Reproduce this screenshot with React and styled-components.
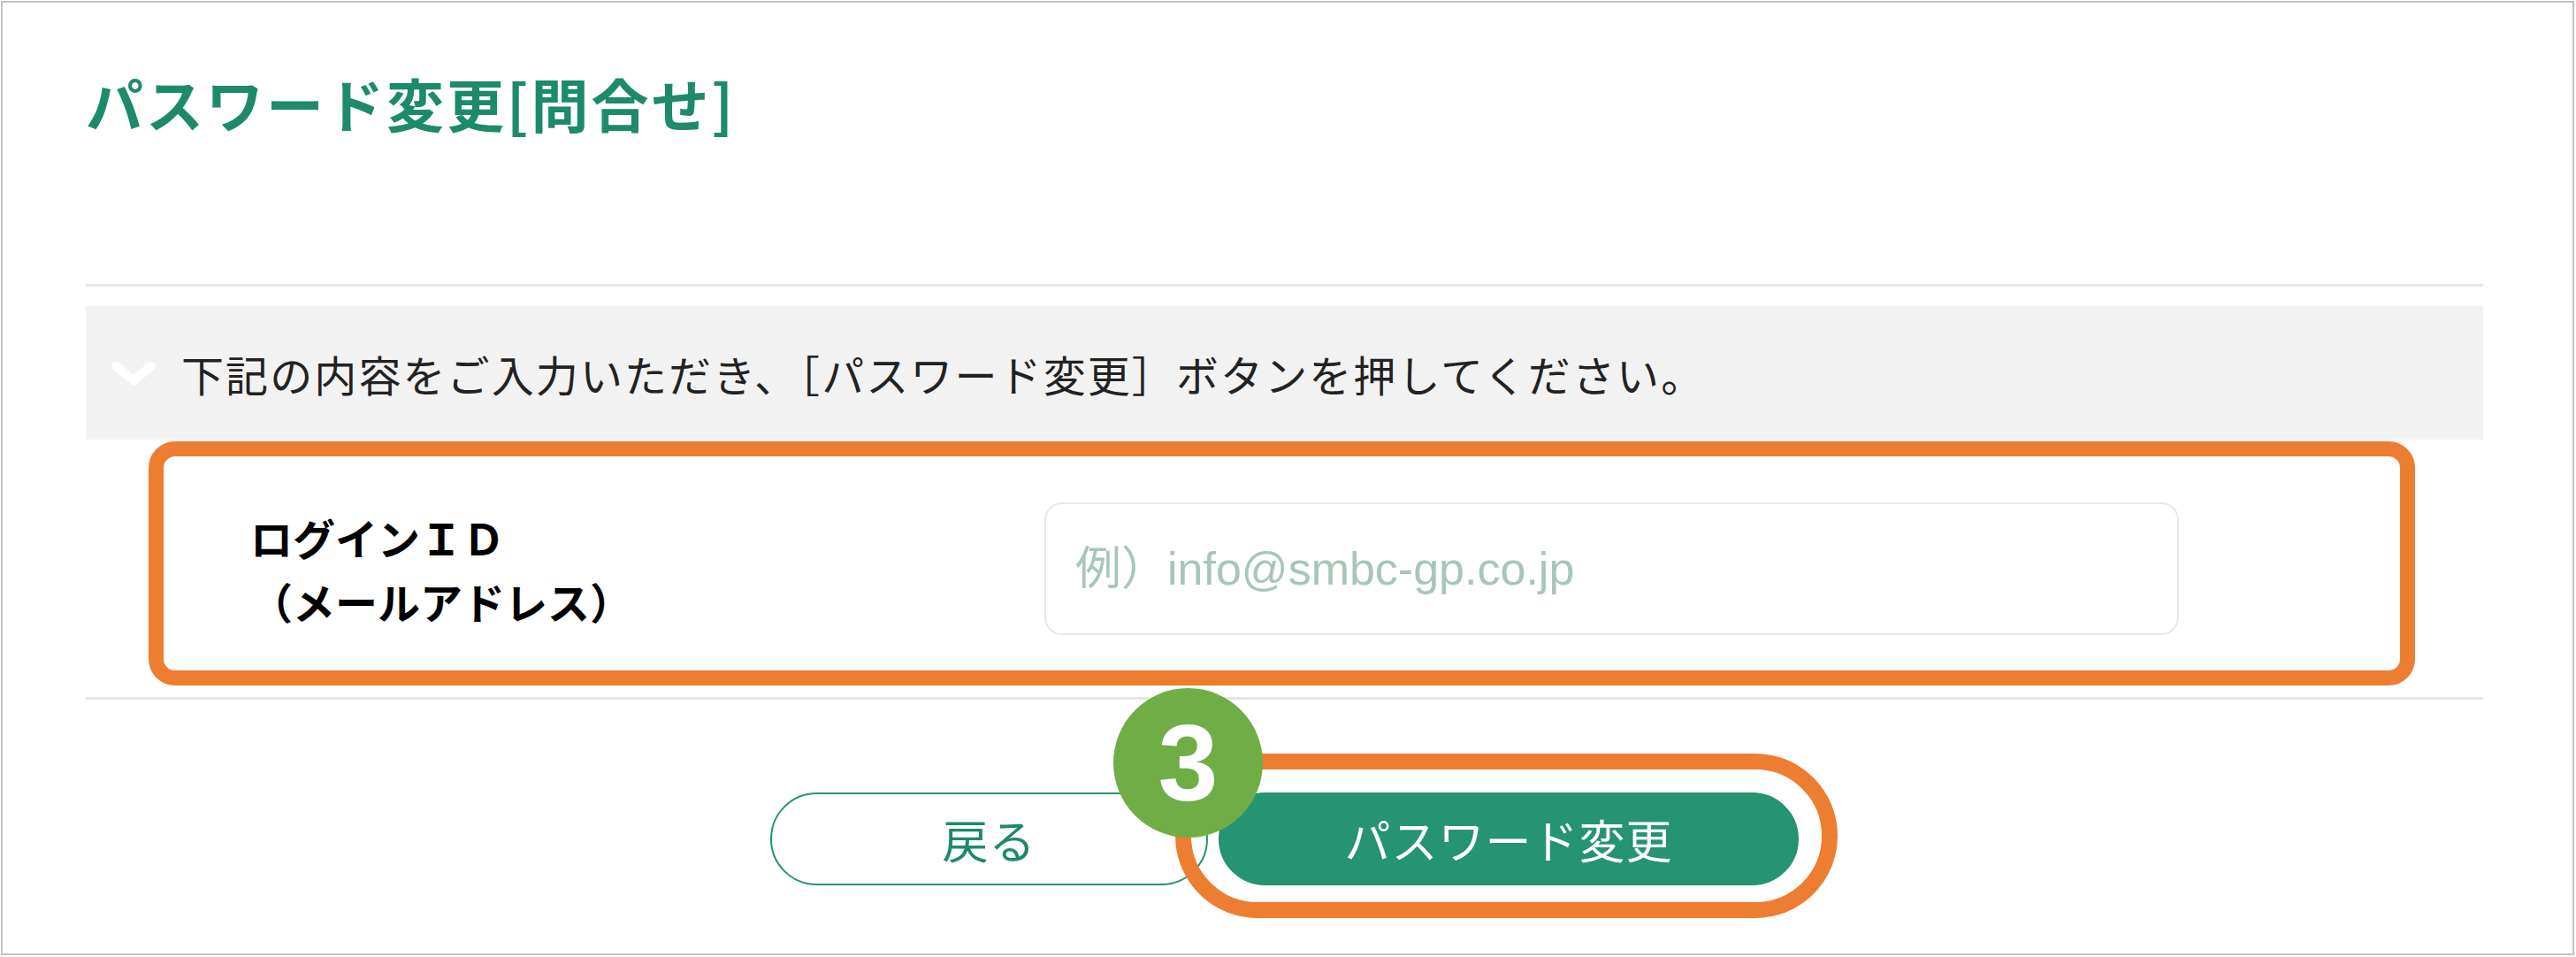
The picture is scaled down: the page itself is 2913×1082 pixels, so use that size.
import React from 'react';
import styled, { createGlobalStyle } from 'styled-components';

const JP = `"Noto Sans CJK JP", "Noto Sans", sans-serif`;

const GlobalStyle = createGlobalStyle`
  html, body {
    margin: 0;
    padding: 0;
    background: #fff;
  }
  body {
    font-family: ${JP};
  }
`;

const Frame = styled.div`
  box-sizing: border-box;
  width: 2910px;
  height: 1079px;
  margin: 1px 0 0 1px;
  border: 2px solid #c3c3c3;
  padding: 0 101px 0 94px;
  display: flex;
  flex-direction: column;
`;

const Header = styled.div`
  height: 318px;
  box-sizing: border-box;
  padding-top: 81px;
`;

const Title = styled.h1`
  margin: 0;
  font-family: ${JP};
  font-size: 65px;
  line-height: 1;
  font-weight: 700;
  letter-spacing: 3px;
  color: #1d8a6b;
`;

const Divider = styled.hr`
  margin: 0;
  border: none;
  height: 3px;
  background: #e5e5e5;
  flex-shrink: 0;
`;

const Notice = styled.div`
  margin-top: 22px;
  height: 151px;
  background: #f2f2f2;
  display: flex;
  align-items: center;
  padding-left: 28px;
  gap: 28px;
`;

const NoticeText = styled.p`
  margin: 0;
  font-size: 48px;
  letter-spacing: 2.1px;
  color: #222;
  line-height: 1;
`;

const FormRow = styled.div`
  position: relative;
  height: 291px;
  display: flex;
  align-items: center;
`;

const Label = styled.label`
  box-sizing: border-box;
  width: 1084px;
  padding-left: 186px;
  font-size: 48px;
  font-weight: 700;
  line-height: 72px;
  color: #000;
`;

const TextInput = styled.input`
  box-sizing: border-box;
  width: 1283px;
  height: 150px;
  border: 2px solid #e3e8f1;
  border-radius: 20px;
  padding: 0 0 0 33px;
  font-family: "Liberation Sans", ${JP};
  font-size: 52px;
  background: #fff;
  outline: none;

  &::placeholder {
    color: #a8c6b8;
  }
`;

const Highlight = styled.div`
  position: absolute;
  pointer-events: none;
  border: ${p => p.thick}px solid #ed7d31;
  border-radius: ${p => p.radius}px;
  top: ${p => p.top}px;
  left: ${p => p.left}px;
  right: ${p => p.right}px;
  bottom: ${p => p.bottom}px;
  z-index: 2;
`;

const Actions = styled.div`
  padding-top: 105px;
  display: flex;
  justify-content: center;
  gap: 12px;
`;

const Button = styled.button`
  box-sizing: border-box;
  height: 105px;
  width: ${p => p.width}px;
  border-radius: 53px;
  font-family: ${JP};
  font-size: 52px;
  letter-spacing: 1px;
  line-height: 1;
  cursor: pointer;
  border: 2px solid #279272;
  background: ${p => (p.primary ? '#269373' : '#fff')};
  color: ${p => (p.primary ? '#fff' : '#1d8a6b')};
`;

const PrimaryWrap = styled.div`
  position: relative;
`;

const StepBadge = styled.div`
  position: absolute;
  z-index: 3;
  left: -119px;
  top: -118px;
  width: 169px;
  height: 169px;
  border-radius: 50%;
  background: #70ad47;
  color: #fff;
  display: flex;
  align-items: center;
  justify-content: center;
  font-family: "Liberation Sans", sans-serif;
  font-weight: 700;
  font-size: 122px;
  line-height: 1;
`;

function Chevron() {
  return (
    <svg width="52" height="28" viewBox="0 0 52 28">
      <polyline
        points="6,6 26,22 46,6"
        fill="none"
        stroke="#fff"
        strokeWidth="10"
        strokeLinecap="round"
        strokeLinejoin="round"
      />
    </svg>
  );
}

export default function App() {
  return (
    <>
      <GlobalStyle />
      <Frame>
        <Header>
          <Title>パスワード変更[問合せ]</Title>
        </Header>
        <Divider />
        <Notice>
          <Chevron />
          <NoticeText>下記の内容をご入力いただき、［パスワード変更］ボタンを押してください。</NoticeText>
        </Notice>
        <FormRow>
          <Label htmlFor="login-id">
            ログインＩＤ
            <br />
            （メールアドレス）
          </Label>
          <TextInput id="login-id" type="text" placeholder="例）info@smbc-gp.co.jp" />
          <Highlight thick={17} radius={30} top={2} left={71} right={77} bottom={13} />
        </FormRow>
        <Divider />
        <Actions>
          <Button width={495}>戻る</Button>
          <PrimaryWrap>
            <Button primary width={656}>パスワード変更</Button>
            <Highlight thick={18} radius={100} top={-44} left={-49} right={-44} bottom={-37} />
            <StepBadge>3</StepBadge>
          </PrimaryWrap>
        </Actions>
      </Frame>
    </>
  );
}
